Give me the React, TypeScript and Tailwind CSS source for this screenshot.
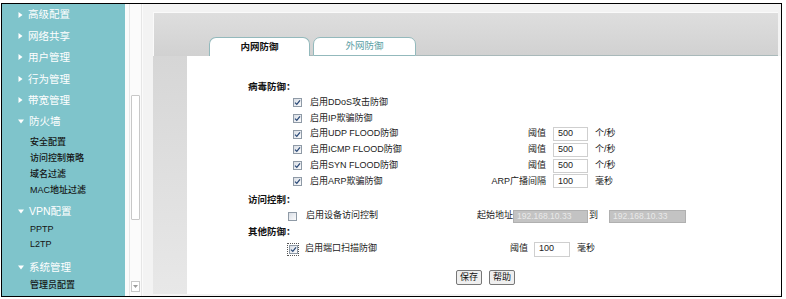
import React from 'react';

const font = "font-['Liberation_Sans','Noto_Sans_CJK_SC',sans-serif]";

const Tri = ({ open }: { open?: boolean }) =>
  open ? (
    <svg width="6" height="5" viewBox="0 0 6 5" className="shrink-0">
      <path d="M0 0.5 L6 0.5 L3 4.5 Z" fill="#ffffff" />
    </svg>
  ) : (
    <svg width="5" height="6" viewBox="0 0 5 6" className="shrink-0">
      <path d="M0.5 0 L4.5 3 L0.5 6 Z" fill="#ffffff" />
    </svg>
  );

const MainItem = ({ label, open, cls = 'h-[21.4px]' }: { label: string; open?: boolean; cls?: string }) => (
  <div className={`flex items-center pl-[16px] text-[10.5px] text-white ${cls}`}>
    <Tri open={open} />
    <span className="ml-[5px] leading-none">{label}</span>
  </div>
);

const SubItem = ({ label, cls = 'h-[16px]' }: { label: string; cls?: string }) => (
  <div className={`flex items-center pl-[28px] text-[9px] font-medium text-[#141414] ${cls}`}>
    <span className="leading-none">{label}</span>
  </div>
);

const Check = ({ checked = true }: { checked?: boolean }) => (
  <span className="flex h-[9px] w-[9px] shrink-0 items-center justify-center border border-[#8f9aa6] bg-gradient-to-br from-[#d9dee5] to-[#fbfbfc]">
    {checked && (
      <svg width="7" height="7" viewBox="0 0 7 7">
        <path d="M1 3.6 L2.8 5.4 L6 1.4" stroke="#2b4a78" strokeWidth="1.3" fill="none" />
      </svg>
    )}
  </span>
);

const Box = ({ value, cls }: { value: string; cls: string }) => (
  <span className={`flex items-center border border-[#cfcfcf] bg-white pl-[4px] text-[9px] text-[#222] ${cls}`}>
    {value}
  </span>
);

const Title = ({ label, cls = '' }: { label: string; cls?: string }) => (
  <div className={`flex h-[16px] items-center pl-[61px] text-[9.5px] font-bold text-[#111] ${cls}`}>{label}</div>
);

interface Extra {
  label: string;
  value: string;
  unit: string;
}

const VirusRow = ({ label, extra }: { label: string; extra?: Extra }) => (
  <div className="flex h-[15.7px] items-center">
    <div className="ml-[106px] flex w-[187px] items-center">
      <Check />
      <span className="ml-[8px] text-[9px] text-[#222]">{label}</span>
    </div>
    {extra && (
      <>
        <span className="w-[66px] text-right text-[9px] text-[#222]">{extra.label}</span>
        <Box value={extra.value} cls="ml-[7px] h-[14px] w-[35px]" />
        <span className="ml-[7px] text-[9px] text-[#222]">{extra.unit}</span>
      </>
    )}
  </div>
);

const Btn = ({ label, cls = '' }: { label: string; cls?: string }) => (
  <span className={`flex h-[15px] items-center justify-center rounded-[2px] border border-[#777] bg-[#efefef] px-[3px] text-[9px] text-[#111] ${cls}`}>
    {label}
  </span>
);

export default function App() {
  return (
    <div className={`h-[299px] w-[786px] bg-white pl-[1px] pt-[3px] ${font}`}>
      <div className="flex h-[294px] w-[781px] border border-black">
        {/* sidebar */}
        <div className="w-[123px] bg-[#7fc4cb]">
          <MainItem label="高级配置" />
          <MainItem label="网络共享" />
          <MainItem label="用户管理" />
          <MainItem label="行为管理" />
          <MainItem label="带宽管理" />
          <MainItem label="防火墙" open />
          <div className="pt-[2px]">
            <SubItem label="安全配置" />
            <SubItem label="访问控制策略" />
            <SubItem label="域名过滤" />
            <SubItem label="MAC地址过滤" />
          </div>
          <MainItem label="VPN配置" open cls="mt-[3px] h-[20px]" />
          <SubItem label="PPTP" />
          <SubItem label="L2TP" cls="h-[15px]" />
          <MainItem label="系统管理" open cls="mt-[4px] h-[21.4px]" />
          <SubItem label="管理员配置" />
        </div>

        {/* scrollbar */}
        <div className="flex w-[18px] flex-col bg-[#fbfbfb] pl-[4px] pr-[1px]">
          <div className="flex flex-1 flex-col border-x border-[#e6e6e6] px-px">
            <div className="mt-[91px] h-[125px] rounded-[1px] border border-[#c8c8c8] bg-white" />
            <div className="flex-1" />
            <div className="mb-[4px] flex h-[11px] items-center justify-center border border-[#c8c8c8] bg-white">
              <svg width="5" height="3" viewBox="0 0 5 3">
                <path d="M0 0 L5 0 L2.5 3 Z" fill="#9a9a9a" />
              </svg>
            </div>
          </div>
        </div>

        {/* main */}
        <div className="flex flex-1 flex-col bg-[#f3f3f3] pb-[2px] pl-[10px] pt-[8px]">
          <div className="mr-[3px] flex h-[44px] items-end border-l border-t border-[#fafafa] bg-gradient-to-b from-[#dedede] to-[#d1d1d1] pl-[55px]">
            <div className="flex h-[19px] w-[101px] items-center justify-center rounded-t-[7px] border border-b-0 border-[#93b9bc] bg-white text-[9.5px] font-bold text-[#111]">
              内网防御
            </div>
            <div className="h-[19px] w-[3px] border-b border-[#a9b9ba]" />
            <div className="flex h-[19px] w-[103px] items-center justify-center rounded-t-[7px] border border-[#93b9bc] bg-white text-[9.5px] text-[#5a9ea4]">
              外网防御
            </div>
            <div className="h-px flex-1 bg-[#a9b9ba]" />
          </div>
          <div className="flex flex-1">
            <div className="w-[34px] bg-gradient-to-b from-[#d6d6d6] to-[#e8e8e8]" />
            <div className="flex-1 bg-white pt-[23px]">
              <Title label="病毒防御：" />
              <VirusRow label="启用DDoS攻击防御" />
              <VirusRow label="启用IP欺骗防御" />
              <VirusRow label="启用UDP FLOOD防御" extra={{ label: '阈值', value: '500', unit: '个/秒' }} />
              <VirusRow label="启用ICMP FLOOD防御" extra={{ label: '阈值', value: '500', unit: '个/秒' }} />
              <VirusRow label="启用SYN FLOOD防御" extra={{ label: '阈值', value: '500', unit: '个/秒' }} />
              <VirusRow label="启用ARP欺骗防御" extra={{ label: 'ARP广播间隔', value: '100', unit: '毫秒' }} />

              <Title label="访问控制：" cls="mt-[3px]" />
              <div className="flex h-[16px] items-center">
                <div className="ml-[101px] flex w-[189px] items-center">
                  <Check checked={false} />
                  <span className="ml-[9px] text-[9px] text-[#222]">启用设备访问控制</span>
                </div>
                <span className="w-[36px] text-[9px] text-[#222]">起始地址</span>
                <span className="flex h-[13px] w-[75px] items-center border border-[#b0b0b0] bg-[#c3c3c3] pl-[3px] text-[8.5px] text-[#e9e9e9]">
                  192.168.10.33
                </span>
                <span className="ml-px w-[12px] text-[9px] text-[#222]">到</span>
                <span className="ml-[8px] flex h-[13px] w-[77px] items-center border border-[#b0b0b0] bg-[#c3c3c3] pl-[3px] text-[8.5px] text-[#e9e9e9]">
                  192.168.10.33
                </span>
              </div>

              <Title label="其他防御：" />
              <div className="flex h-[18px] items-center">
                <div className="ml-[100px] flex w-[223px] items-center">
                  <span className="flex h-[13px] w-[12px] items-center justify-center border border-dotted border-[#555]">
                    <Check />
                  </span>
                  <span className="ml-[6px] text-[9px] text-[#222]">启用端口扫描防御</span>
                </div>
                <span className="w-[18px] text-[9px] text-[#222]">阈值</span>
                <Box value="100" cls="ml-[6px] h-[15px] w-[36px]" />
                <span className="ml-[7px] text-[9px] text-[#222]">毫秒</span>
              </div>

              <div className="mt-[12px] flex">
                <Btn label="保存" cls="ml-[269px]" />
                <Btn label="帮助" cls="ml-[7px]" />
              </div>
            </div>
          </div>
        </div>
      </div>
    </div>
  );
}
